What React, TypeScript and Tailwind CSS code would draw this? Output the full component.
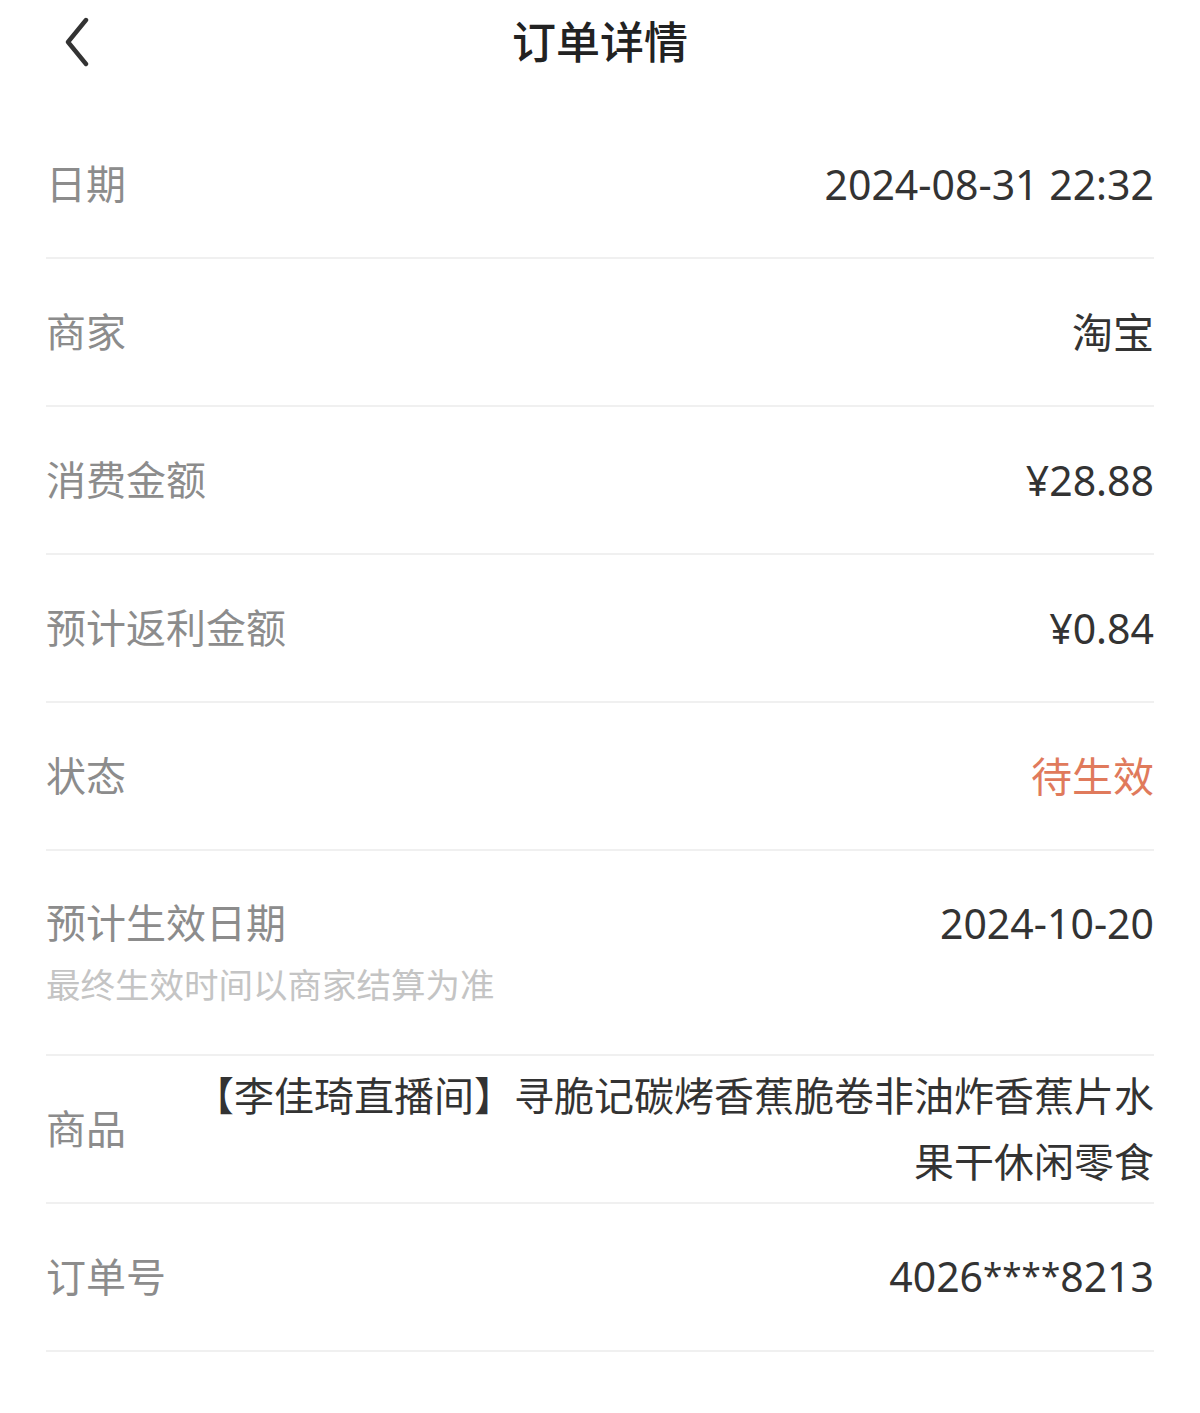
import React from "react";

const font = { fontFamily: '"Noto Sans", "Noto Sans CJK SC", sans-serif' };

function Row({ label, value, valueClass = "text-[#333333]" }: { label: string; value: React.ReactNode; valueClass?: string }) {
  return (
    <div className="flex h-[148px] items-center justify-between border-b-2 border-[#f0f0f0]">
      <span className="text-[40px] leading-[48px] text-[#8c8c8c]">{label}</span>
      <span className={`text-[41px] leading-[48px] ${valueClass}`}>{value}</span>
    </div>
  );
}

export default function App() {
  return (
    <div className="min-h-[1413px] w-[1200px] bg-white" style={font}>
      <div className="relative flex h-[84px] items-center justify-center">
        <button className="absolute left-[57px] top-[16px] flex h-[52px] w-[36px] items-center justify-center">
          <svg width="30" height="50" viewBox="0 0 30 50" fill="none">
            <path d="M26 3 L8 25 L26 47" stroke="#333333" strokeWidth="4.4" strokeLinecap="round" strokeLinejoin="round" />
          </svg>
        </button>
        <h1 className="text-[44px] font-medium leading-[56px] text-[#222222]">订单详情</h1>
      </div>
      <div className="mt-[27px] px-[46px]">
        <Row label="日期" value="2024-08-31 22:32" />
        <Row label="商家" value="淘宝" />
        <Row label="消费金额" value="¥28.88" />
        <Row label="预计返利金额" value="¥0.84" />
        <Row label="状态" value="待生效" valueClass="text-[#e07a5c]" />
        <div className="flex h-[205px] items-start justify-between border-b-2 border-[#f0f0f0] pt-[48px]">
          <div className="flex flex-col gap-[18px]">
            <span className="text-[40px] leading-[48px] text-[#8c8c8c]">预计生效日期</span>
            <span className="text-[34.5px] leading-[40px] text-[#c4c4c4]">最终生效时间以商家结算为准</span>
          </div>
          <span className="text-[41px] leading-[48px] text-[#333333]">2024-10-20</span>
        </div>
        <div className="flex h-[148px] items-center justify-between border-b-2 border-[#f0f0f0]">
          <span className="shrink-0 text-[40px] leading-[48px] text-[#8c8c8c]">商品</span>
          <span className="flex-1 pl-[60px] text-right text-[40px] leading-[66px] text-[#333333]">
            【李佳琦直播间】寻脆记碳烤香蕉脆卷非油炸香蕉片水果干休闲零食
          </span>
        </div>
        <Row
          label="订单号"
          value={
            <>
              4026<span className="relative -top-[4px] text-[35px]">****</span>8213
            </>
          }
        />
      </div>
    </div>
  );
}
